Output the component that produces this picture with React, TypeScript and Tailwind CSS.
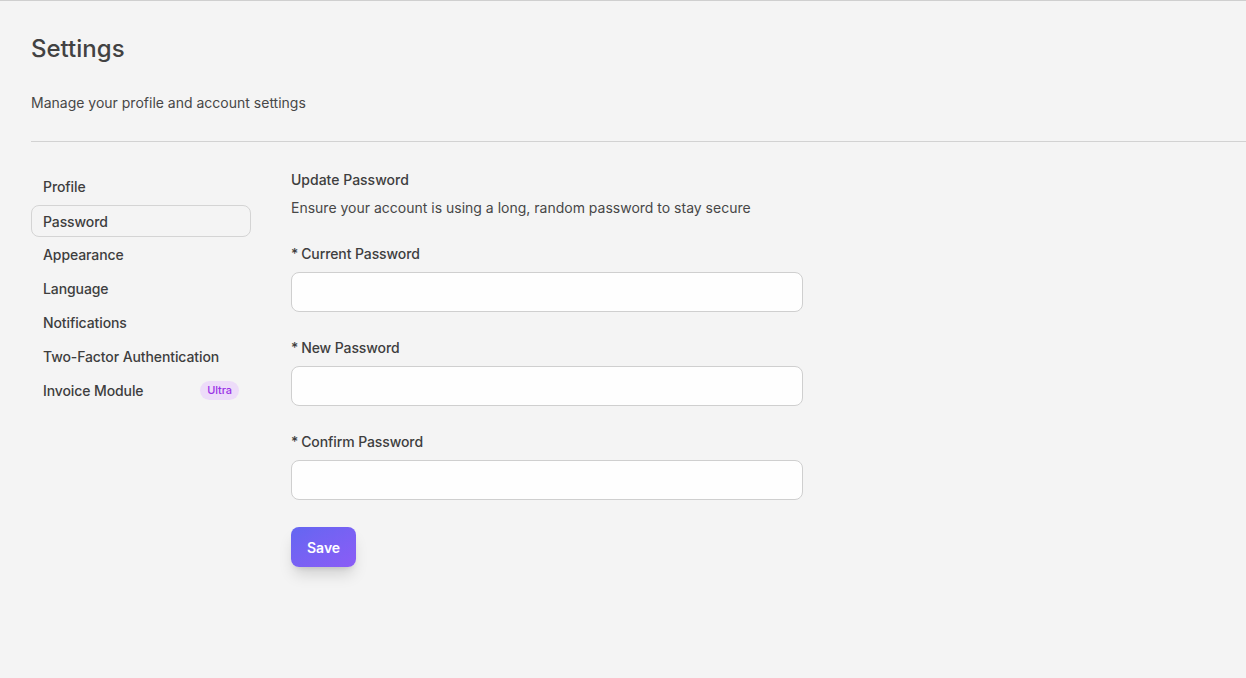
const navItems = [
  "Profile",
  "Password",
  "Appearance",
  "Language",
  "Notifications",
  "Two-Factor Authentication",
];

const fields = ["Current Password", "New Password", "Confirm Password"];

const App = () => {
  return (
    <div
      className="min-h-[678px] w-full border-t border-[#cfcfcf] bg-[#f4f4f4] pl-[31px] text-[#3a3a3a]"
      style={{ fontFamily: "Inter, 'Noto Sans', sans-serif" }}
    >
      <div className="pt-[33px]">
        <h1 className="text-[24px] font-medium leading-[30px] text-[#424242]">Settings</h1>
        <p className="mt-[29px] text-[14px] leading-[20px] text-[#474747]">
          Manage your profile and account settings
        </p>
      </div>
      <div className="mt-[28px] border-t border-[#d2d2d2]" />

      <div className="flex gap-10 pt-[28px]">
        <nav className="flex w-[220px] flex-col gap-[2px]">
          {navItems.map((item) => (
            <a
              key={item}
              className={
                item === "Password"
                  ? "mt-[1px] -mb-[1px] flex h-[32px] items-center rounded-lg border border-[#d4d4d4] px-[11px] text-[14px] font-medium tracking-[-0.1px] text-[#3e3e3e]"
                  : "flex h-[32px] items-center rounded-lg border border-transparent px-[11px] text-[14px] font-medium tracking-[-0.1px] text-[#3e3e3e]"
              }
            >
              {item}
            </a>
          ))}
          <a className="flex h-[32px] items-center justify-between rounded-lg border border-transparent pl-[11px] pr-[11px] text-[14px] font-medium tracking-[-0.1px] text-[#3e3e3e]">
            Invoice Module
            <span className="rounded-full bg-[#eddcf9] px-[7px] py-[2px] text-[11px] font-medium leading-[15px] text-[#9a32e6]">
              Ultra
            </span>
          </a>
        </nav>

        <div className="w-[512px]">
          <h2 className="text-[14px] font-medium leading-[20px] text-[#3e3e3e]">Update Password</h2>
          <p className="mt-[8px] text-[14px] leading-[20px] text-[#474747]">
            Ensure your account is using a long, random password to stay secure
          </p>
          <form className="mt-[26px] flex flex-col gap-[26px]">
            {fields.map((label) => (
              <div key={label} className="flex flex-col gap-[8px]">
                <label className="text-[14px] font-medium leading-[20px] tracking-[-0.1px] text-[#3e3e3e]">
                  <span className="mr-[3px]">*</span>
                  {label}
                </label>
                <input
                  type="password"
                  className="h-[40px] w-full rounded-lg border border-[#cfcfcf] bg-[#fefefe] px-3 text-[14px] outline-none"
                />
              </div>
            ))}
            <div className="pt-[1px]">
              <button
                type="button"
                className="h-[40px] rounded-lg bg-gradient-to-br from-[#6366f1] to-[#8b5cf6] px-4 text-[14px] font-semibold text-white shadow-lg shadow-black/15"
              >
                Save
              </button>
            </div>
          </form>
        </div>
      </div>
    </div>
  );
};

export default App;
